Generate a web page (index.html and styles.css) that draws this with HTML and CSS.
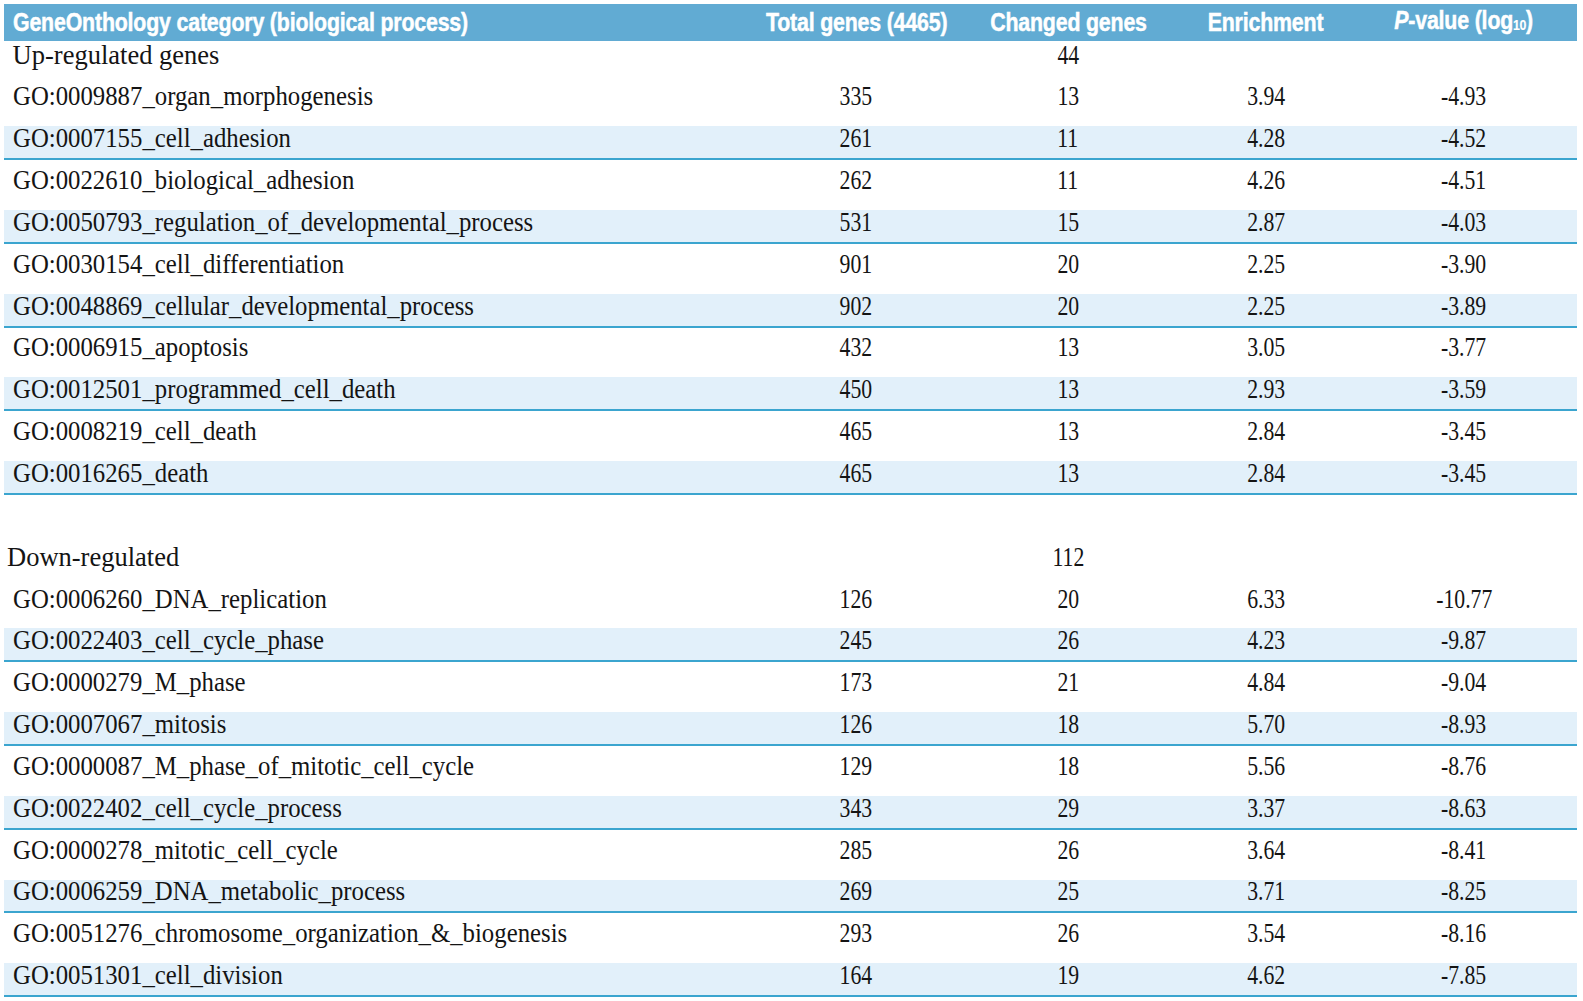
FILE: index.html
```html
<!DOCTYPE html>
<html>
<head>
<meta charset="utf-8">
<title>GeneOnthology categories</title>
<link rel="stylesheet" href="styles.css">
</head>
<body>
<table class="go">
  <colgroup>
    <col class="c-name">
    <col class="c-total">
    <col class="c-changed">
    <col class="c-enrich">
    <col class="c-pval">
  </colgroup>
  <thead>
    <tr class="head">
      <th class="name"><span class="hd">GeneOnthology category (biological process)</span></th>
      <th><span class="hd">Total genes (4465)</span></th>
      <th><span class="hd">Changed genes</span></th>
      <th><span class="hd">Enrichment</span></th>
      <th class="pv"><span class="hd"><i>P</i>-value (log<sub>10</sub>)</span></th>
    </tr>
  </thead>
  <tbody>
    <tr class="sub sub-up"><td class="name">Up-regulated genes</td><td></td><td class="num"><span>44</span></td><td></td><td class="pv"></td></tr>
    <tr class="row"><td class="name"><span class="lab">GO:0009887_organ_morphogenesis</span></td><td class="num"><span>335</span></td><td class="num"><span>13</span></td><td class="num"><span>3.94</span></td><td class="num pv"><span>-4.93</span></td></tr>
    <tr class="row alt"><td class="name"><span class="lab">GO:0007155_cell_adhesion</span></td><td class="num"><span>261</span></td><td class="num"><span>11</span></td><td class="num"><span>4.28</span></td><td class="num pv"><span>-4.52</span></td></tr>
    <tr class="row"><td class="name"><span class="lab">GO:0022610_biological_adhesion</span></td><td class="num"><span>262</span></td><td class="num"><span>11</span></td><td class="num"><span>4.26</span></td><td class="num pv"><span>-4.51</span></td></tr>
    <tr class="row alt"><td class="name"><span class="lab">GO:0050793_regulation_of_developmental_process</span></td><td class="num"><span>531</span></td><td class="num"><span>15</span></td><td class="num"><span>2.87</span></td><td class="num pv"><span>-4.03</span></td></tr>
    <tr class="row"><td class="name"><span class="lab">GO:0030154_cell_differentiation</span></td><td class="num"><span>901</span></td><td class="num"><span>20</span></td><td class="num"><span>2.25</span></td><td class="num pv"><span>-3.90</span></td></tr>
    <tr class="row alt"><td class="name"><span class="lab">GO:0048869_cellular_developmental_process</span></td><td class="num"><span>902</span></td><td class="num"><span>20</span></td><td class="num"><span>2.25</span></td><td class="num pv"><span>-3.89</span></td></tr>
    <tr class="row"><td class="name"><span class="lab">GO:0006915_apoptosis</span></td><td class="num"><span>432</span></td><td class="num"><span>13</span></td><td class="num"><span>3.05</span></td><td class="num pv"><span>-3.77</span></td></tr>
    <tr class="row alt"><td class="name"><span class="lab">GO:0012501_programmed_cell_death</span></td><td class="num"><span>450</span></td><td class="num"><span>13</span></td><td class="num"><span>2.93</span></td><td class="num pv"><span>-3.59</span></td></tr>
    <tr class="row"><td class="name"><span class="lab">GO:0008219_cell_death</span></td><td class="num"><span>465</span></td><td class="num"><span>13</span></td><td class="num"><span>2.84</span></td><td class="num pv"><span>-3.45</span></td></tr>
    <tr class="row alt"><td class="name"><span class="lab">GO:0016265_death</span></td><td class="num"><span>465</span></td><td class="num"><span>13</span></td><td class="num"><span>2.84</span></td><td class="num pv"><span>-3.45</span></td></tr>
    <tr class="row spacer"><td colspan="5"></td></tr>
    <tr class="row sub-down"><td class="name">Down-regulated</td><td></td><td class="num"><span>112</span></td><td></td><td class="pv"></td></tr>
    <tr class="row"><td class="name"><span class="lab">GO:0006260_DNA_replication</span></td><td class="num"><span>126</span></td><td class="num"><span>20</span></td><td class="num"><span>6.33</span></td><td class="num pv"><span>-10.77</span></td></tr>
    <tr class="row alt"><td class="name"><span class="lab">GO:0022403_cell_cycle_phase</span></td><td class="num"><span>245</span></td><td class="num"><span>26</span></td><td class="num"><span>4.23</span></td><td class="num pv"><span>-9.87</span></td></tr>
    <tr class="row"><td class="name"><span class="lab">GO:0000279_M_phase</span></td><td class="num"><span>173</span></td><td class="num"><span>21</span></td><td class="num"><span>4.84</span></td><td class="num pv"><span>-9.04</span></td></tr>
    <tr class="row alt"><td class="name"><span class="lab">GO:0007067_mitosis</span></td><td class="num"><span>126</span></td><td class="num"><span>18</span></td><td class="num"><span>5.70</span></td><td class="num pv"><span>-8.93</span></td></tr>
    <tr class="row"><td class="name"><span class="lab">GO:0000087_M_phase_of_mitotic_cell_cycle</span></td><td class="num"><span>129</span></td><td class="num"><span>18</span></td><td class="num"><span>5.56</span></td><td class="num pv"><span>-8.76</span></td></tr>
    <tr class="row alt"><td class="name"><span class="lab">GO:0022402_cell_cycle_process</span></td><td class="num"><span>343</span></td><td class="num"><span>29</span></td><td class="num"><span>3.37</span></td><td class="num pv"><span>-8.63</span></td></tr>
    <tr class="row"><td class="name"><span class="lab">GO:0000278_mitotic_cell_cycle</span></td><td class="num"><span>285</span></td><td class="num"><span>26</span></td><td class="num"><span>3.64</span></td><td class="num pv"><span>-8.41</span></td></tr>
    <tr class="row alt"><td class="name"><span class="lab">GO:0006259_DNA_metabolic_process</span></td><td class="num"><span>269</span></td><td class="num"><span>25</span></td><td class="num"><span>3.71</span></td><td class="num pv"><span>-8.25</span></td></tr>
    <tr class="row"><td class="name"><span class="lab">GO:0051276_chromosome_organization_&amp;_biogenesis</span></td><td class="num"><span>293</span></td><td class="num"><span>26</span></td><td class="num"><span>3.54</span></td><td class="num pv"><span>-8.16</span></td></tr>
    <tr class="row alt"><td class="name"><span class="lab">GO:0051301_cell_division</span></td><td class="num"><span>164</span></td><td class="num"><span>19</span></td><td class="num"><span>4.62</span></td><td class="num pv"><span>-7.85</span></td></tr>
  </tbody>
</table>
</body>
</html>
```
FILE: styles.css
```css
html, body {
  margin: 0;
  background: #ffffff;
}

body {
  padding: 4px 0 0 4px;
  font-family: "Liberation Serif", "Times New Roman", serif;
  color: #141414;
}

.go {
  width: 1573px;
  table-layout: fixed;
  border-collapse: separate;
  border-spacing: 0;
}

.c-name { width: 742px; }
.c-total { width: 219px; }
.c-changed { width: 206px; }
.c-enrich { width: 190px; }
.c-pval { width: 216px; }

th, td {
  padding: 0;
  white-space: nowrap;
  text-align: center;
  vertical-align: middle;
  overflow: visible;
}

th.pv, td.pv { padding-right: 10px; }

/* header band */
.head { height: 36.5px; }

.head th {
  background: #61abd3;
  color: #ffffff;
  font-family: "Liberation Sans", Arial, sans-serif;
  font-weight: bold;
  font-size: 26px;
  line-height: 30px;
}

.hd {
  display: inline-block;
  transform: scaleX(0.82);
  transform-origin: center center;
  letter-spacing: -0.2px;
  -webkit-text-stroke: 0.5px #ffffff;
}

th.name, td.name {
  text-align: left;
  padding-left: 8.6px;
}

th.name .hd { transform-origin: left center; }

.hd sub {
  font-size: 15px;
  vertical-align: baseline;
  position: relative;
  top: 1px;
  letter-spacing: -0.5px;
  -webkit-text-stroke: 0.2px #ffffff;
}

.hd i { font-style: italic; }

/* body rows */
td {
  font-size: 26.5px;
  line-height: 29px;
}

.lab {
  display: inline-block;
  transform: scaleX(0.935);
  transform-origin: left center;
}

.sub-up { height: 34.6px; }
.sub-up td { padding-bottom: 7px; }

.row { height: 41.85px; }

.row td {
  padding-top: 1px;
  border-bottom: 2px solid transparent;
}

.row.alt td {
  background: linear-gradient(to bottom, transparent 8px, #e2f0fa 8px);
  border-bottom-color: #3ba5cf;
}

.sub-down td.name { padding-left: 3px; }

.num span {
  display: inline-block;
  transform: scaleX(0.82);
}
```
